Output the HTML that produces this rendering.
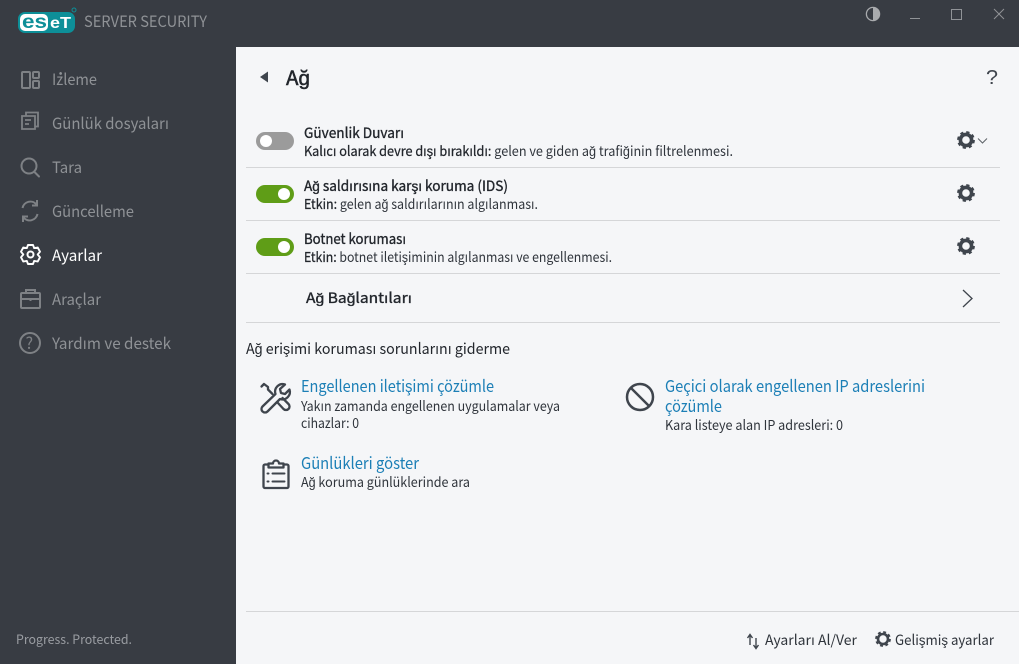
<!DOCTYPE html>
<html lang="tr"><head><meta charset="utf-8"><title>ESET Server Security</title>
<style>
html,body{margin:0;padding:0;width:1019px;height:664px;overflow:hidden;background:#f5f6f8}
svg{display:block}
text{font-family:"Noto Sans CJK JP","Liberation Sans",sans-serif;font-size:14px;fill:#2f343b}
.n{fill:#8f9296;font-size:15.5px}
.b{fill:#22262c;font-size:14.2px;stroke:#22262c;stroke-width:.35px}
.d{fill:#2f343b;font-size:13.6px}
.s{fill:#22262c;stroke:#22262c;stroke-width:.25px}
.l{fill:#1c7fb6;font-size:16.2px}
.ic{fill:none;stroke:#7e8185;stroke-width:2}
.dk{fill:none;stroke:#3f454d;stroke-width:2.3;stroke-linecap:round;stroke-linejoin:round}
</style></head><body>
<svg width="1019" height="664" viewBox="0 0 1019 664" xmlns="http://www.w3.org/2000/svg">
<defs>
<g id="g"><circle r="5.6" fill="none" stroke="#3f454d" stroke-width="3.6"/><circle r="7.5" fill="none" stroke="#3f454d" stroke-width="2.8" stroke-dasharray="3.1 2.79"/></g>
</defs>
<rect width="1019" height="664" fill="#f5f6f8"/>
<rect width="1019" height="47" fill="#383c43"/>
<rect width="236" height="664" fill="#383c43"/>

<!-- logo -->
<rect x="18" y="12" width="57" height="21" rx="7" fill="#0d8f98"/>
<rect x="20" y="14" width="28" height="17" rx="5" fill="#fff"/>
<text x="22" y="28" textLength="25" lengthAdjust="spacingAndGlyphs" style="font-family:'Liberation Sans',sans-serif;font-weight:700;font-size:19px;fill:#0d8f98">es</text>
<text x="50" y="28" textLength="21" lengthAdjust="spacingAndGlyphs" style="font-family:'Liberation Sans',sans-serif;font-weight:700;font-size:16px;fill:#fff">eT</text>
<circle cx="74" cy="10" r="2" fill="none" stroke="#0d8f98" stroke-width="1"/>
<text x="84" y="27" textLength="123" lengthAdjust="spacingAndGlyphs" style="font-size:15.5px;fill:#8f9296">SERVER SECURITY</text>

<!-- window controls -->
<circle cx="873" cy="14" r="6.6" fill="none" stroke="#a9abae" stroke-width="1.3"/>
<path d="M873 7.4a6.6 6.6 0 0 1 0 13.2z" fill="#a9abae"/>
<path d="M910 18.500h10" stroke="#909397" stroke-width="1"/>
<rect x="951.500" y="9.500" width="10" height="10" fill="none" stroke="#909397" stroke-width="1"/>
<path d="M994 9l10 10M1004 9l-10 10" stroke="#909397" stroke-width="1"/>

<!-- sidebar items -->
<g class="ic">
<rect x="22" y="72" width="8" height="16" rx="1"/><rect x="33" y="72" width="6" height="6" rx="1"/><rect x="33" y="81" width="6" height="7" rx="1"/>
<path d="M26 116v-3.500h12v14h-3M22 116h13v13h-13zM25 120h6M25 124h4" stroke-width="1.800"/>
<circle cx="29" cy="166" r="7.500"/><path d="M34.500 172l4.500 4.500" stroke-linecap="round"/>
<path d="M22.500 208a8 8 0 0 1 14-3.500M37.500 214a8 8 0 0 1-14 3.500M37 200v5.500h-5M23 222v-5.500h5"/>
<rect x="21" y="293" width="19" height="15" rx="1"/><path d="M26 293v-3h9v3M21 299h19M30.500 298v3"/>
<circle cx="30" cy="343" r="10"/>
</g>
<path transform="translate(30.500 254.500)" d="M-2.500-9.500L2.500-9.500L3.700-6.400L7.200-7L9.500-2.800L7.200 0L9.500 2.800L7.200 7L3.700 6.400L2.500 9.500L-2.500 9.500L-3.700 6.400L-7.200 7L-9.500 2.800L-7.200 0L-9.500-2.800L-7.200-7L-3.700-6.400Z" fill="none" stroke="#fff" stroke-width="1.900" stroke-linejoin="round"/>
<circle cx="30.500" cy="254.500" r="3" fill="none" stroke="#fff" stroke-width="2"/>
<text x="25.500" y="349" style="font-size:16px;fill:#7e8185">?</text>

<text class="n" x="52" y="85" textLength="45" lengthAdjust="spacingAndGlyphs">İzleme</text>
<text class="n" x="52" y="129" textLength="117" lengthAdjust="spacingAndGlyphs">Günlük dosyaları</text>
<text class="n" x="52" y="173" textLength="30" lengthAdjust="spacingAndGlyphs">Tara</text>
<text class="n" x="52" y="217" textLength="82" lengthAdjust="spacingAndGlyphs">Güncelleme</text>
<text class="n" x="52" y="261" textLength="50" lengthAdjust="spacingAndGlyphs" style="fill:#fff">Ayarlar</text>
<text class="n" x="52" y="305" textLength="49" lengthAdjust="spacingAndGlyphs">Araçlar</text>
<text class="n" x="52" y="349" textLength="119" lengthAdjust="spacingAndGlyphs">Yardım ve destek</text>
<text x="16" y="644" textLength="116" lengthAdjust="spacingAndGlyphs" style="font-size:12.500px;fill:#9a9da2">Progress. Protected.</text>

<!-- header -->
<path d="M268 71.500v11l-8-5.500z" fill="#3f454d"/>
<text x="286" y="85" textLength="24" lengthAdjust="spacingAndGlyphs" style="font-size:20px;fill:#22262c;stroke:#22262c;stroke-width:.5px">Ağ</text>
<text x="986" y="84" textLength="12" lengthAdjust="spacingAndGlyphs" style="font-family:'Liberation Sans',sans-serif;font-size:20px;fill:#3f454d">?</text>

<!-- rows -->
<rect x="256" y="132" width="38" height="18" rx="9" fill="#9b9b9b"/><circle cx="266" cy="141" r="6" fill="#fff"/>
<rect x="256" y="185" width="38" height="18" rx="9" fill="#5f9d17"/><circle cx="284" cy="194" r="6" fill="#fff"/>
<rect x="256" y="238" width="38" height="18" rx="9" fill="#5f9d17"/><circle cx="284" cy="247" r="6" fill="#fff"/>

<text class="b" x="304" y="138" textLength="100" lengthAdjust="spacingAndGlyphs">Güvenlik Duvarı</text>
<text class="d" x="304" y="156" textLength="429" lengthAdjust="spacingAndGlyphs"><tspan class="s">Kalıcı olarak devre dışı bırakıldı:</tspan> gelen ve giden ağ trafiğinin filtrelenmesi.</text>
<text class="b" x="304" y="191" textLength="204" lengthAdjust="spacingAndGlyphs">Ağ saldırısına karşı koruma (IDS)</text>
<text class="d" x="304" y="209" textLength="234" lengthAdjust="spacingAndGlyphs"><tspan class="s">Etkin:</tspan> gelen ağ saldırılarının algılanması.</text>
<text class="b" x="304" y="244" textLength="102" lengthAdjust="spacingAndGlyphs">Botnet koruması</text>
<text class="d" x="304" y="262" textLength="308" lengthAdjust="spacingAndGlyphs"><tspan class="s">Etkin:</tspan> botnet iletişiminin algılanması ve engellenmesi.</text>
<text class="b" x="306" y="303" textLength="106" lengthAdjust="spacingAndGlyphs">Ağ Bağlantıları</text>

<path d="M246 167.500h754M246 220.500h754M246 273.500h754M246 322.500h754M246 611.500h773" stroke="#d5d6d8" stroke-width="1"/>

<use href="#g" x="966" y="140"/><use href="#g" x="966" y="193"/><use href="#g" x="966" y="246"/>
<path d="M978 138.500l4.500 4.500 4.500-4.500" fill="none" stroke="#5d6268" stroke-width="1"/>
<path d="M963 290l9 8.500-9 8.500" fill="none" stroke="#3f454d" stroke-width="1.300"/>

<text x="246" y="354" textLength="264" lengthAdjust="spacingAndGlyphs" style="font-size:15px;fill:#22262c">Ağ erişimi koruması sorunlarını giderme</text>

<!-- links -->
<text class="l" x="301" y="392" textLength="193" lengthAdjust="spacingAndGlyphs">Engellenen iletişimi çözümle</text>
<text class="d" x="301" y="411" textLength="259" lengthAdjust="spacingAndGlyphs">Yakın zamanda engellenen uygulamalar veya</text>
<text class="d" x="301" y="428" textLength="58" lengthAdjust="spacingAndGlyphs">cihazlar: 0</text>
<text class="l" x="301" y="469" textLength="118" lengthAdjust="spacingAndGlyphs">Günlükleri göster</text>
<text class="d" x="301" y="487" textLength="169" lengthAdjust="spacingAndGlyphs">Ağ koruma günlüklerinde ara</text>
<text class="l" x="665" y="392" textLength="260" lengthAdjust="spacingAndGlyphs">Geçici olarak engellenen IP adreslerini</text>
<text class="l" x="665" y="412" textLength="57" lengthAdjust="spacingAndGlyphs">çözümle</text>
<text class="d" x="665" y="430" textLength="178" lengthAdjust="spacingAndGlyphs">Kara listeye alan IP adresleri: 0</text>

<!-- tools icon -->
<g class="dk">
<path d="M285 384.500a7.500 7.500 0 0 0-9.500 9.500L262.500 406.500a3.400 3.400 0 0 0 5 5L280 399a7.500 7.500 0 0 0 9.500-9.500l-4.500 4.500-4-1-1-4z"/>
<path d="M261.500 386.500l2.500-2.500 4 3v2.500l4.500 4.500"/>
<path d="M277.500 402.500l6 6.500a3.300 3.300 0 0 0 5-5l-6-6"/>
</g>
<!-- clipboard -->
<g class="dk">
<path d="M268.500 464.500h-3.500a1.500 1.500 0 0 0-1.500 1.500v20.500a1.500 1.500 0 0 0 1.500 1.500h22a1.500 1.500 0 0 0 1.500-1.500V466a1.500 1.500 0 0 0-1.500-1.500h-3.500"/>
<path d="M268.500 467.500v-4h4.500a3 3 0 0 1 6 0h4.500v4z"/>
<path d="M267.500 473.500h1M272.500 473.500h12M267.500 481.500h1M272.500 481.500h12" stroke-width="2"/>
</g>
<!-- prohibited -->
<circle cx="640" cy="397" r="13" fill="none" stroke="#3f454d" stroke-width="2.500"/>
<path d="M631 388l18 18" stroke="#3f454d" stroke-width="2.500"/>

<!-- footer -->
<path d="M750 645v-10M747.500 638l2.500-3.500 2.500 3.500M756 638v10M753.500 645l2.500 3.500 2.500-3.500" fill="none" stroke="#3f454d" stroke-width="1.400"/>
<text x="765" y="645" textLength="92" lengthAdjust="spacingAndGlyphs" style="font-size:14px;fill:#2f343b">Ayarları Al/Ver</text>
<circle cx="883" cy="639" r="5" fill="none" stroke="#3f454d" stroke-width="2.600"/>
<circle cx="883" cy="639" r="6.700" fill="none" stroke="#3f454d" stroke-width="2.400" stroke-dasharray="2.800 2.460"/>
<text x="895" y="645" textLength="99" lengthAdjust="spacingAndGlyphs" style="font-size:14px;fill:#2f343b">Gelişmiş ayarlar</text>
</svg>
</body></html>
